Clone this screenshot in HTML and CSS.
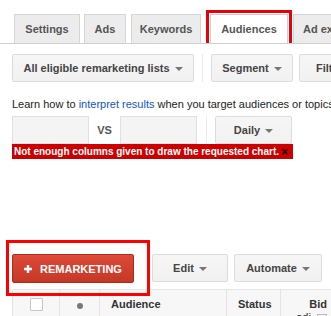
FILE: index.html
```html
<!DOCTYPE html>
<html lang="en">
<head>
  <meta charset="UTF-8" />
  <title>Audiences</title>
  <link rel="stylesheet" href="styles.css">
</head>
<body>
  <div class="tabs">
    <div class="tab tab-settings">Settings</div>
    <div class="tab tab-ads">Ads</div>
    <div class="tab tab-keywords">Keywords</div>
    <div class="tab tab-active">Audiences</div>
    <div class="tab tab-adext">Ad extensions</div>
  </div>

  <div class="toolbar">
    <button class="btn btn-lists">All eligible remarketing lists <span class="caret"></span></button>
    <span class="sep"></span>
    <button class="btn btn-segment">Segment <span class="caret"></span></button>
    <button class="btn btn-filter">Filter <span class="caret"></span></button>
  </div>

  <p class="learn">Learn how to <a href="#">interpret results</a> when you target audiences or topics to</p>

  <div class="chart-controls">
    <div class="metric"></div>
    <span class="vs">VS</span>
    <div class="metric"></div>
    <span class="sep sep-wide"></span>
    <button class="btn btn-daily">Daily <span class="caret"></span></button>
  </div>
  <div class="chart-error">
    <span>Not enough columns given to draw the requested chart.</span>
    <span class="close">&times;</span>
  </div>

  <div class="actions">
    <div class="highlight">
      <button class="btn-red">
        <svg width="8" height="8" viewBox="0 0 8 8"><path d="M2.8 0h2.4v2.8H8v2.4H5.2V8H2.8V5.2H0V2.8h2.8z" fill="#fff"/></svg>
        REMARKETING
      </button>
    </div>
    <button class="btn btn-edit">Edit <span class="caret"></span></button>
    <button class="btn btn-automate">Automate <span class="caret"></span></button>
  </div>

  <div class="grid-head">
    <div class="col col-check"><span class="checkbox"></span></div>
    <div class="col col-dot"><span class="dot"></span></div>
    <div class="col col-audience">Audience</div>
    <div class="col col-status">Status</div>
    <div class="col col-bid">Bid<br><span class="adj">adj. <span class="help">?</span></span></div>
  </div>
</body>
</html>
```

FILE: styles.css
```css
* { margin: 0; padding: 0; box-sizing: border-box; }
body {
  font-family: "Liberation Sans", Arial, sans-serif;
  font-size: 11px;
  color: #222;
  background: #fff;
  width: 331px;
  overflow: hidden;
}

/* tab strip */
.tabs {
  display: flex; padding: 14px 0 0 14px; height: 44px;
  border-bottom: 1px solid #d0d0d0; white-space: nowrap; overflow: hidden;
}
.tab {
  flex: none; height: 29px; line-height: 28px; text-align: center;
  background: #ececec; border: 1px solid #d6d6d6; border-bottom: none;
  font-weight: bold; color: #555; margin-right: 4px;
}
.tab-settings { width: 66px; }
.tab-ads { width: 42px; margin-right: 5px; }
.tab-keywords { width: 70px; margin-right: 9px; }
.tab-active {
  width: 78px; height: 30px; background: #fff; border-color: #d0d0d0;
  outline: 3px solid #e8000b; outline-offset: 1px; margin-right: 5px;
}
.tab-adext { width: 90px; text-align: left; padding-left: 9px; }

/* buttons */
.btn {
  height: 28px; border: 1px solid #dcdcdc; border-radius: 2px;
  background: linear-gradient(#f6f6f6, #f1f1f1);
  font: bold 11px "Liberation Sans", Arial, sans-serif; color: #444;
  display: inline-flex; align-items: center; justify-content: center; flex: none;
}
.caret {
  display: inline-block; width: 0; height: 0; margin-left: 5px; margin-top: 1px;
  border-left: 4px solid transparent; border-right: 4px solid transparent; border-top: 4px solid #777;
}
.sep { flex: none; width: 1px; height: 28px; background: #ebebeb; margin: 0 8px; }
.sep-wide { margin: 0 8px 0 9px; }

.toolbar { display: flex; margin: 10px 0 0 12px; white-space: nowrap; }
.btn-lists { width: 182px; }
.btn-segment { width: 82px; }
.btn-filter { width: 70px; margin-left: 6px; justify-content: flex-start; padding-left: 16px; }

.learn { margin: 14px 0 0 12px; line-height: 16px; white-space: nowrap; color: #222; }
.learn a { color: #15c; text-decoration: none; }

.chart-controls { display: flex; align-items: center; margin: 4px 0 0 12px; }
.metric { width: 77px; height: 28px; border: 1px solid #e0e0e0; background: #f4f4f4; }
.vs { width: 31px; text-align: center; font-weight: bold; color: #555; }
.btn-daily { width: 77px; }

.chart-error {
  display: flex; justify-content: space-between; align-items: center;
  width: 281px; height: 15px; margin-left: 12px; padding: 0 5px 0 2px;
  background: #c00; color: #fff; font-size: 10px; font-weight: bold;
}
.chart-error .close { color: #111; font-size: 12px; line-height: 12px; }

/* action row */
.actions { display: flex; margin: 95px 0 0 12px; }
.highlight { position: relative; margin-right: 18px; }
.highlight::after {
  content: ""; position: absolute; left: -6px; top: -14px; width: 138px; height: 50px;
  border: 3px solid #f00;
}
.btn-red {
  width: 122px; height: 29px; border: 1px solid #b0281a; border-radius: 2px;
  background: linear-gradient(#dd4b39, #c53727);
  font: bold 11px "Liberation Sans", Arial, sans-serif; color: #fff;
  display: flex; align-items: center; gap: 8px; padding-left: 11px;
}
.btn-edit { width: 76px; margin-right: 6px; }
.btn-automate { width: 88px; }

/* grid header */
.grid-head {
  display: flex; margin: 6px 0 0 12px; height: 40px;
  border-top: 1px solid #e5e5e5; background: #f7f7f7;
  font-weight: bold; color: #333;
}
.col { flex: none; border-left: 1px solid #e3e3e3; padding-top: 8px; }
.col-check { width: 47px; padding-top: 8px; display: flex; justify-content: center; }
.checkbox { width: 13px; height: 13px; border: 1px solid #c6c6c6; background: #fff; border-radius: 1px; }
.col-dot { width: 40px; display: flex; justify-content: center; padding-top: 13px; }
.dot { width: 6px; height: 6px; border-radius: 50%; background: #777; }
.col-audience { width: 127px; padding-left: 11px; padding-top: 8px; }
.col-status { width: 54px; padding-left: 11px; padding-top: 8px; }
.col-bid { width: 51px; text-align: right; padding-right: 4px; padding-top: 8px; line-height: 13px; }
.adj { font-weight: normal; }
.help { display: inline-block; width: 10px; height: 10px; border: 1px solid #bbb; font-size: 8px; line-height: 8px; text-align: center; color: #666; }
```
